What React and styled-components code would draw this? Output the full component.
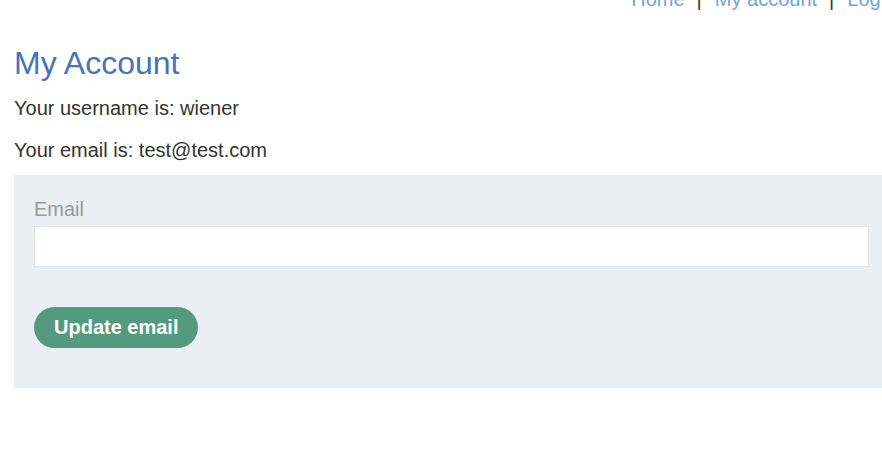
import styled, { createGlobalStyle } from "styled-components";

const GlobalStyle = createGlobalStyle`
  html, body {
    margin: 0;
    padding: 0;
    background: #fff;
    overflow: hidden;
  }
  body {
    font-family: "Liberation Sans", Arial, sans-serif;
    color: #333332;
  }
`;

const Page = styled.div`
  width: 875px;
  margin-left: 14px;
`;

const TopLinks = styled.nav`
  display: flex;
  justify-content: flex-end;
  align-items: baseline;
  margin-top: -13px;
  margin-right: -25px;
  font-size: 20px;
  line-height: 24px;
`;

const NavLink = styled.a`
  color: #70a3dc;
  text-decoration: none;
`;

const Separator = styled.span`
  color: #333;
  margin: 0 13px 0 12px;
`;

const Title = styled.h1`
  margin: 33px 0 0;
  font-size: 32px;
  font-weight: 400;
  line-height: 38px;
  color: #4a71b9;
`;

const Line = styled.p`
  margin: 0;
  font-size: 20px;
  line-height: 42px;
  &:first-of-type {
    margin-top: 5px;
  }
`;

const Panel = styled.form`
  background: #ebeef2;
  margin-top: 4px;
  padding: 20px 20px 40px;
  display: flex;
  flex-direction: column;
  align-items: flex-start;
`;

const Label = styled.label`
  font-size: 20px;
  line-height: 28px;
  color: #999;
`;

const Input = styled.input`
  box-sizing: border-box;
  width: 100%;
  height: 41px;
  border: 1px solid #e3e4e6;
  background: #fff;
  margin: 3px 0 0;
  padding: 0 10px;
  font-size: 16px;
`;

const Button = styled.button`
  margin-top: 40px;
  height: 41px;
  padding: 0 20px;
  border: none;
  border-radius: 21px;
  background: #549a80;
  color: #fff;
  font-family: "Liberation Sans", Arial, sans-serif;
  font-size: 20px;
  font-weight: 700;
  cursor: pointer;
`;

export default function App() {
  return (
    <>
      <GlobalStyle />
      <Page>
        <TopLinks>
          <NavLink href="#">Home</NavLink>
          <Separator>|</Separator>
          <NavLink href="#">My account</NavLink>
          <Separator>|</Separator>
          <NavLink href="#">Log out</NavLink>
        </TopLinks>
        <Title>My Account</Title>
        <Line>Your username is: wiener</Line>
        <Line>Your email is: test@test.com</Line>
        <Panel onSubmit={(e) => e.preventDefault()}>
          <Label htmlFor="email">Email</Label>
          <Input id="email" type="email" name="email" />
          <Button type="submit">Update email</Button>
        </Panel>
      </Page>
    </>
  );
}
